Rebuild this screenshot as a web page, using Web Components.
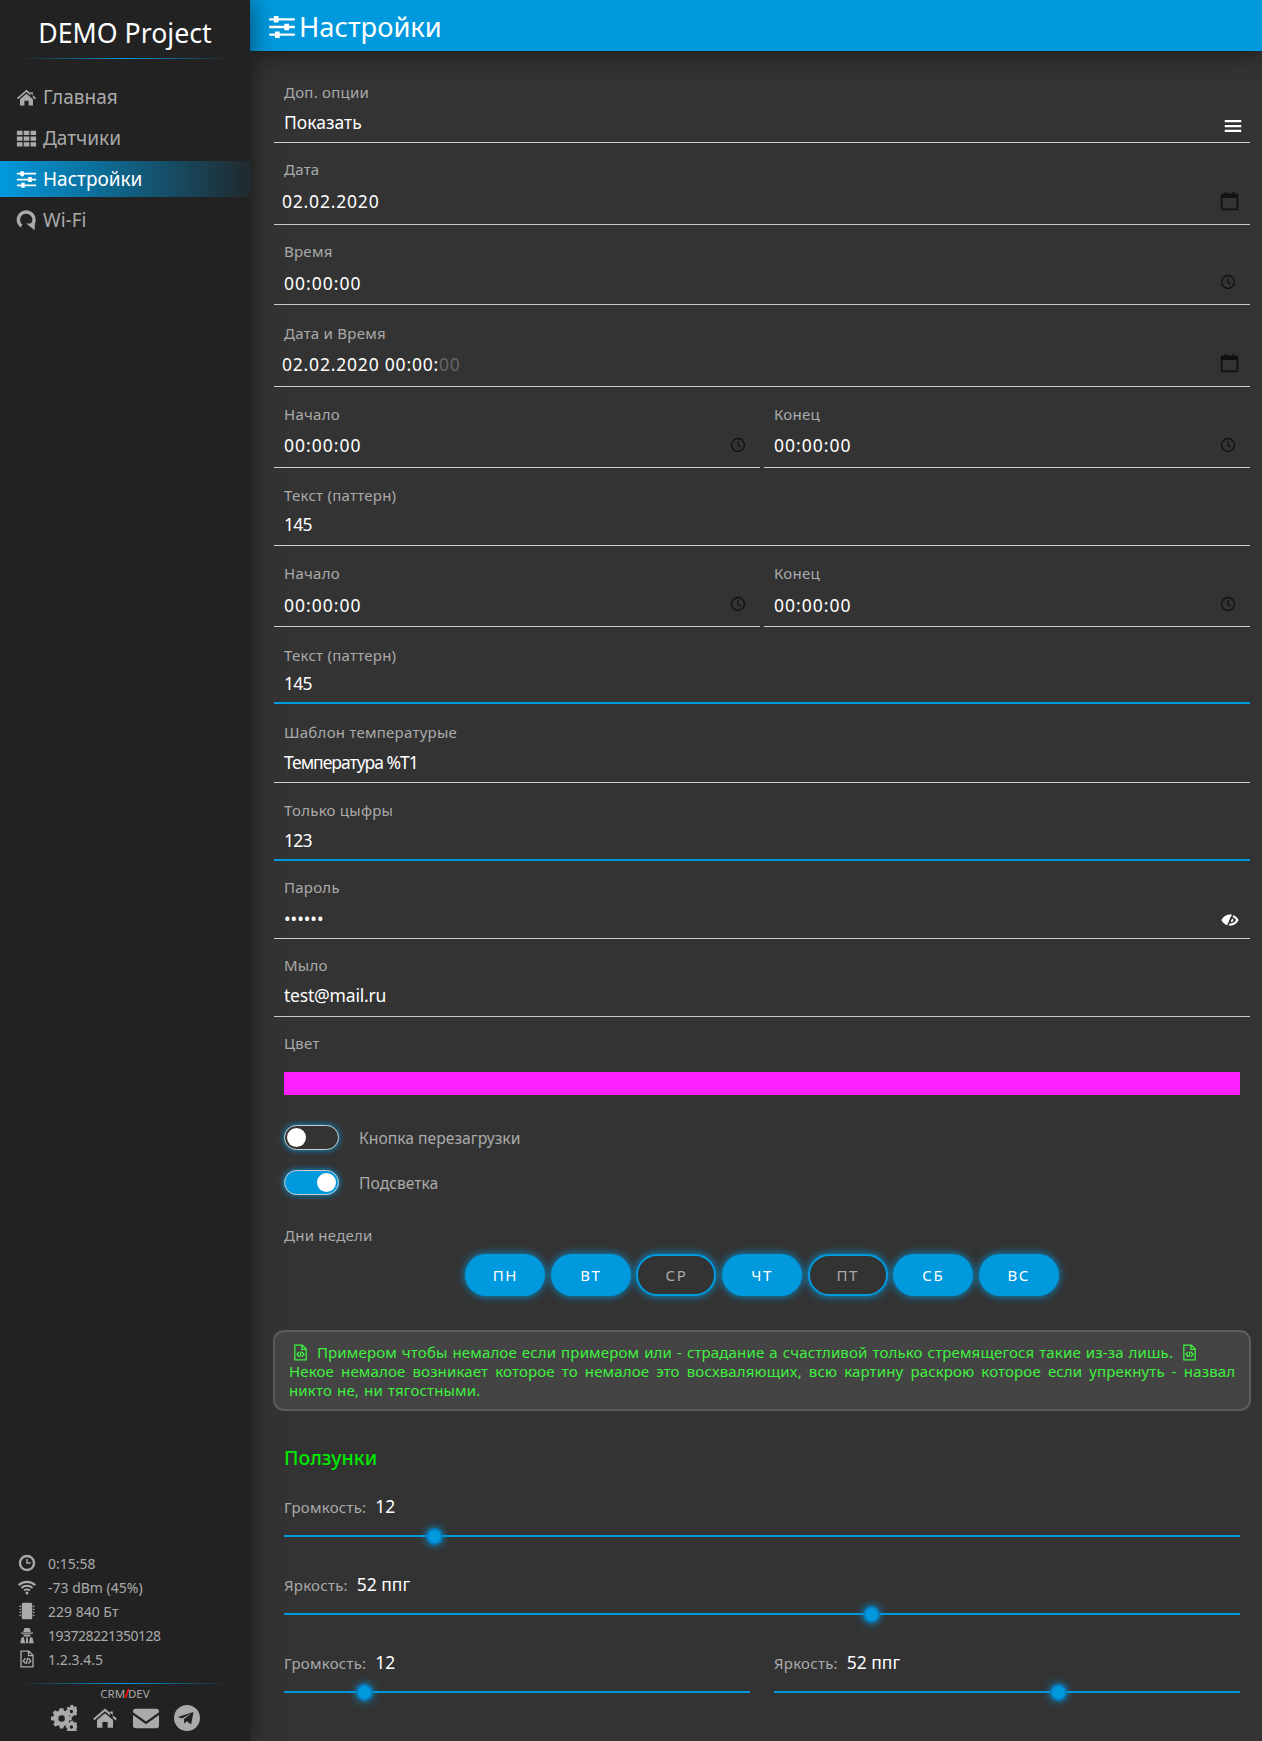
<!DOCTYPE html>
<html lang="ru">
<head>
<meta charset="utf-8">
<title>Настройки</title>
<style>
  html, body { margin: 0; height: 1741px; background: #333; overflow: hidden; }
  body { font-family: "Noto Sans", sans-serif; color: #aaa; }
</style>
</head>
<body>
<demo-app>
  <side-bar slot="side"></side-bar>
  <top-bar slot="top" title="Настройки"></top-bar>

  <form-field label="Доп. опции" value="Показать" icon="menu" h="92" lb="8"></form-field>
  <form-field label="Дата" value="02.02.2020" ls=".8" icon="calendar" h="82" shift="-2" vb="11" lb="10"></form-field>
  <form-field label="Время" value="00:00:00" ls="1" icon="clock" h="80" vb="9" lb="10"></form-field>
  <form-field label="Дата и Время" value="02.02.2020 00:00:" ls=".8" ghost="00" icon="calendar" h="82" shift="-2" vb="10" lb="9"></form-field>
  <field-row>
    <form-field label="Начало" value="00:00:00" ls="1" icon="clock" h="81" vb="10" lb="9"></form-field>
    <form-field label="Конец" value="00:00:00" ls="1" icon="clock" h="81" vb="10" lb="9"></form-field>
  </field-row>
  <form-field label="Текст (паттерн)" value="145" ls="-.7" h="78" vb="9" lb="7"></form-field>
  <field-row>
    <form-field label="Начало" value="00:00:00" ls="1" icon="clock" h="81" vb="9" lb="10"></form-field>
    <form-field label="Конец" value="00:00:00" ls="1" icon="clock" h="81" vb="9" lb="10"></form-field>
  </field-row>
  <form-field label="Текст (паттерн)" value="145" ls="-.7" h="77" blue vb="7" lb="6"></form-field>
  <form-field label="Шаблон температурые" value="Температура %T1" ls="-1" h="79" vb="8"></form-field>
  <form-field label="Только цыфры" value="123" ls="-.7" h="78" blue vb="7"></form-field>
  <form-field label="Пароль" value="••••••" icon="eye" h="78" vb="8" lb="9"></form-field>
  <form-field label="Мыло" value="test@mail.ru" ls="-.2" h="78" vb="9" lb="8"></form-field>
  <color-field label="Цвет" value="#ff20ff"></color-field>

  <toggle-row label="Кнопка перезагрузки" first></toggle-row>
  <toggle-row label="Подсветка" on></toggle-row>

  <day-picker label="Дни недели" days="ПН,ВТ,СР,ЧТ,ПТ,СБ,ВС" off="СР,ПТ"></day-picker>

  <note-box></note-box>

  <section-title>Ползунки</section-title>

  <range-field label="Громкость:" value="12" pos="15.7"></range-field>
  <range-field label="Яркость:" value="52 ппг" pos="61.4"></range-field>
  <field-row>
    <range-field label="Громкость:" value="12" pos="17.2"></range-field>
    <range-field label="Яркость:" value="52 ппг" pos="60.9"></range-field>
  </field-row>
</demo-app>

<script>
const ICONS = {
  home: '<path fill="currentColor" d="M12 3.2 1 12.6l1.3 1.5L12 5.8l4.6 3.9V6h2.6v5.9l2.5 2.2 1.3-1.500zM12 7.600 4.600 13.900V21h5v-5.400h4.800V21h5v-7.100z"/>',
  grid: '<path fill="currentColor" d="M1 3h6.400v5H1zM8.800 3h6.400v5H8.800zM16.600 3H23v5h-6.400zM1 9.600h6.400v5H1zM8.800 9.600h6.400v5H8.800zM16.600 9.600H23v5h-6.400zM1 16.200h6.400v5H1zM8.800 16.200h6.400v5H8.800zM16.600 16.200H23v5h-6.400z"/>',
  sliders: '<path fill="currentColor" d="M1 4.400h22v2H1zM1 11h22v2H1zM1 17.600h22v2H1zM5 2.600h4v5.600H5zM14 9.200h4v5.600h-4zM6 15.800h4v5.600H6z"/>',
  redo: '<path fill="none" stroke="currentColor" stroke-width="4" d="M6.200 18.400A9 9 0 1 1 17.600 18"/><path fill="currentColor" d="M11.600 15.400h9.800v7.600z"/>',
  clockfill: '<path fill="currentColor" fill-rule="evenodd" d="M12 1a11 11 0 1 0 0 22 11 11 0 0 0 0-22zm0 3.200a7.800 7.800 0 1 1 0 15.600 7.800 7.800 0 0 1 0-15.600zM11 6.500V13h6v-2h-4V6.500z"/>',
  wifi: '<path fill="none" stroke="currentColor" stroke-width="2.800" d="M1 9.500C7 3.700 17 3.700 23 9.500M4.600 13.200c4-3.800 10.800-3.800 14.800 0M8.200 16.800c2-1.900 5.600-1.900 7.600 0"/><circle cx="12" cy="20" r="2" fill="currentColor"/>',
  chip: '<path fill="currentColor" d="M7 1h10a2 2 0 0 1 2 2v18a2 2 0 0 1-2 2H7a2 2 0 0 1-2-2V3a2 2 0 0 1 2-2zM2 5h2v1.600H2zM2 9h2v1.600H2zM2 13h2v1.600H2zM2 17h2v1.600H2zM20 5h2v1.600h-2zM20 9h2v1.600h-2zM20 13h2v1.600h-2zM20 17h2v1.600h-2z"/>',
  spy: '<path fill="currentColor" fill-rule="evenodd" d="M8.500 2.500h7l1.600 5.500H6.900zM4 8.800h16v1.600H4zM7 11.400h10l-.8 2.600H7.800zM3 23l1.600-7.500 3-.8 2 8.300zM21 23l-1.600-7.500-3-.8-2 8.300zM11 15h2l.6 8h-3.200z"/>',
  code: '<path fill="none" stroke="currentColor" stroke-width="1.800" d="M4 1.500h10.500L20 7v15.500H4zM14 1.500V7.500h6M10 11l-3 3.500 3 3.500M14 11l3 3.500-3 3.500M12.800 10.500l-1.600 8"/>',
  gears: '<path fill="currentColor" fill-rule="evenodd" d="M8.200 6.500h3.200l.5 2.200 1.500.6 1.900-1.200 2.200 2.200-1.200 1.900.6 1.500 2.200.5v3.200l-2.200.5-.6 1.500 1.200 1.900-2.200 2.200-1.900-1.200-1.500.6-.5 2.200H8.200l-.5-2.200-1.500-.6-1.900 1.200-2.200-2.200 1.200-1.900-.6-1.500L0 17.600v-3.200l2.200-.5.6-1.500-1.200-1.900 2.200-2.200 1.900 1.200 1.500-.6zM9.800 13a3 3 0 1 0 0 6 3 3 0 0 0 0-6z" transform="translate(0 -3.500)"/><path fill="currentColor" fill-rule="evenodd" d="M19.500 0l1 .1.3 1.300 1 .4 1.100-.7 1.200 1.200-.7 1.100.4 1 1.200.3v1.600l-1.200.3-.4 1 .7 1.100-1.200 1.200-1.100-.7-1 .4-.3 1.200H18l-.3-1.200-1-.4-1.100.7-1.200-1.200.7-1.100-.4-1-1.200-.3V5.100l1.200-.3.4-1-.7-1.100 1.200-1.200 1.100.7 1-.4L18 .1zm-.7 4.300a1.600 1.600 0 1 0 0 3.200 1.600 1.600 0 0 0 0-3.200z"/><path fill="currentColor" fill-rule="evenodd" d="M19.500 14.500l1 .1.3 1.300 1 .4 1.100-.7 1.200 1.200-.7 1.100.4 1 1.200.3v1.600l-1.200.3-.4 1 .7 1.100-1.200 1.200-1.100-.7-1 .4-.3 1.200H18l-.3-1.200-1-.4-1.100.7-1.200-1.200.7-1.100-.4-1-1.200-.3v-1.600l1.200-.3.4-1-.7-1.100 1.200-1.200 1.100.7 1-.4.3-1.300zm-.7 4.300a1.600 1.600 0 1 0 0 3.200 1.600 1.600 0 0 0 0-3.200z"/>',
  mail: '<path fill="currentColor" d="M2.500 3.500h19A2.500 2.500 0 0 1 24 6v.8l-12 8.400L0 6.800V6a2.500 2.500 0 0 1 2.500-2.500zM0 9.300l12 8.400 12-8.400V19a2.500 2.500 0 0 1-2.500 2.500h-19A2.500 2.500 0 0 1 0 19z"/>',
  telegram: '<path fill="currentColor" fill-rule="evenodd" d="M12 0a12 12 0 1 0 0 24 12 12 0 0 0 0-24zm6 6.500-2.200 11.600-4-3-2.200 2.300-.5-4.200 7-5.700-8.700 5-3.900-1.500z"/>',
  menu: '<path fill="#fff" d="M1 4h22v3H1zM1 10.500h22v3H1zM1 17h22v3H1z"/>',
  calendar: '<path fill="none" stroke="#111" stroke-width="2" d="M4 5h16a1 1 0 0 1 1 1v15a1 1 0 0 1-1 1H4a1 1 0 0 1-1-1V6a1 1 0 0 1 1-1z"/><path fill="#111" d="M3 4.500h18V9H3zM6.500 2h2v3h-2zM15.500 2h2v3h-2z"/>',
  clock: '<circle cx="12" cy="12" r="9.700" fill="none" stroke="#111" stroke-width="2"/><path fill="none" stroke="#111" stroke-width="2" d="M12 6.500V12.500l4 2.500"/>',
  eye: '<path fill="#fff" d="M.5 12C2.400 8 6.600 4.500 12 4.500S21.600 8 23.500 12c-1.900 4-6.100 7.500-11.500 7.500S2.400 16 .5 12z"/><path fill="#333" d="M13 7.500c3 .2 5.500 2 7.200 4.500-1.700 2.500-4.200 4.500-7.200 4.500-1 0-2-.2-3-.5z"/><path fill="#fff" d="M14.500 9.500a2.700 2.700 0 0 1 0 5.200l-1.700-.4z"/><path stroke="#333" stroke-width="2.200" d="M8 22 17 2"/>'
};
const svg = (name, size) => `<svg xmlns="http://www.w3.org/2000/svg" viewBox="0 0 24 24" width="${size}" height="${size}" aria-hidden="true">${ICONS[name]}</svg>`;

// common base so every element just sets its markup
class Base extends HTMLElement {
  constructor() {
    super();
    this.attachShadow({ mode: 'open' });
  }
  connectedCallback() {
    this.shadowRoot.innerHTML = this.render();
  }
  attr(name, def = '') {
    return this.hasAttribute(name) ? this.getAttribute(name) : def;
  }
}

class DemoApp extends Base {
  render() {
    return `
<style>
  :host { display: grid; grid-template-columns: 250px 1fr; height: 1741px; background: #333; }
  .main { display: flex; flex-direction: column; min-width: 0; }
  .content { padding: 0 12px 0 24px; display: flex; flex-direction: column; }
  ::slotted([slot=side]) { z-index: 3; }
</style>
<slot name="side"></slot>
<div class="main">
  <slot name="top"></slot>
  <div class="content"><slot></slot></div>
</div>`;
  }
}

class SideBar extends Base {
  render() {
    const nav = [['home', 'Главная'], ['grid', 'Датчики'], ['sliders', 'Настройки', 1], ['redo', 'Wi-Fi']];
    const stats = [['clockfill', '0:15:58'], ['wifi', '-73 dBm (45%)'], ['chip', '229 840 Бт'], ['spy', '193728221350128', 1], ['code', '1.2.3.4.5']];
    return `
<style>
  :host { display: flex; flex-direction: column; justify-content: space-between; position: relative; background: #222; height: 1741px; box-shadow: 0 0 24px rgba(0,0,0,.55); color: #aaa; }
  .logo { text-align: center; color: #fff; font-size: 26.7px; line-height: 36px; padding: 15px 0 7px; }
  .rule { height: 1px; margin: 0 18px; background: linear-gradient(90deg, transparent, #0099dd 50%, transparent); }
  nav { display: flex; flex-direction: column; gap: 5px; padding-top: 20px; }
  nav a { display: flex; align-items: center; gap: 6px; height: 36px; padding-left: 16px; font-size: 19px; }
  nav a.on { color: #fff; background: linear-gradient(90deg, #0099dd, rgba(0,153,221,.08) 98%); }
  nav svg { flex: none; }
  .stats { display: flex; flex-direction: column; padding: 0 0 12px 18px; }
  .stats div { display: flex; align-items: center; gap: 12px; height: 24px; font-size: 14px; }
  .stats .tight { letter-spacing: -.5px; }
  .crm { text-align: center; font-size: 11.5px; line-height: 16px; padding-top: 2px; }
  .crm i { color: #f00; font-style: normal; font-weight: 700; margin: 0 -1px; }
  .links { display: flex; justify-content: center; gap: 15px; color: #aaa; padding: 3px 0 10px; }
</style>
<div>
  <div class="logo">DEMO Project</div>
  <div class="rule"></div>
  <nav>${nav.map(n => `<a class="${n[2] ? 'on' : ''}">${svg(n[0], 21)}${n[1]}</a>`).join('')}</nav>
</div>
<div>
  <div class="stats">${stats.map(s => `<div>${svg(s[0], 18)}<span class="${s[2] ? 'tight' : ''}">${s[1]}</span></div>`).join('')}</div>
  <div class="rule"></div>
  <div class="crm">CRM<i>/</i>DEV</div>
  <div class="links">${svg('gears', 26)}${svg('home', 26)}${svg('mail', 26)}${svg('telegram', 26)}</div>
</div>`;
  }
}

class TopBar extends Base {
  render() {
    return `
<style>
  :host { display: flex; align-items: center; gap: 3px; height: 51px; box-sizing: border-box; flex: none; padding: 2px 0 0 18px; background: #0099dd; color: #fff; font-size: 27.3px; box-shadow: 0 0 24px rgba(0,0,0,.6); position: relative; z-index: 2; }
  svg { flex: none; }
</style>
${svg('sliders', 28)}<span>${this.attr('title')}</span>`;
  }
}

class FormField extends Base {
  render() {
    const icon = this.attr('icon');
    const line = this.hasAttribute('blue') ? '2px solid #0099dd' : '1px solid #ccc';
    const place = { menu: [18, 7, 8], calendar: [21, 13, 10], clock: [16, 14, 14], eye: [18, 9, 11] }[icon];
    return `
<style>
  :host { display: flex; flex-direction: column; justify-content: flex-end; height: ${this.attr('h', '80')}px; padding: 0 10px; border-bottom: ${line}; box-sizing: border-box; position: relative; min-width: 0; }
  .label { font-size: 15px; letter-spacing: .25px; line-height: 20px; color: #aaa; margin-bottom: ${this.attr('lb', '8')}px; }
  .val { font-size: 17.5px; letter-spacing: ${this.attr('ls', '0')}px; line-height: 24px; color: #fff; margin-left: ${this.attr('shift', '0')}px; margin-bottom: ${this.attr('vb', '8')}px; white-space: pre; }
  .val i { font-style: normal; color: #666; }
  .ic { position: absolute; display: flex; ${place ? `bottom: ${place[1]}px; right: ${place[2]}px;` : ''} }
</style>
<div class="label">${this.attr('label')}</div>
<div class="val">${this.attr('value')}<i>${this.attr('ghost')}</i></div>
${icon ? `<div class="ic">${svg(icon, place[0])}</div>` : ''}`;
  }
}

class FieldRow extends Base {
  render() {
    return `
<style>
  :host { display: grid; grid-template-columns: 1fr 1fr; column-gap: 4px; }
</style>
<slot></slot>`;
  }
}

class ColorField extends Base {
  render() {
    return `
<style>
  :host { display: block; padding: 0 10px; }
  .label { font-size: 15px; letter-spacing: .25px; line-height: 20px; color: #aaa; padding-top: 16px; margin-bottom: 19px; }
  .swatch { height: 23px; background: ${this.attr('value')}; }
</style>
<div class="label">${this.attr('label')}</div>
<div class="swatch"></div>`;
  }
}

class ToggleRow extends Base {
  render() {
    const on = this.hasAttribute('on');
    return `
<style>
  :host { display: flex; align-items: center; gap: 20px; height: 25px; margin: ${this.hasAttribute('first') ? 30 : 20}px 10px 0; font-size: 15.7px; color: #aaa; }
  .sw { width: 55px; height: 25px; box-sizing: border-box; border: 1px solid #ccc; border-radius: 13px; box-shadow: 0 0 6px #0099dd; background: ${on ? '#0099dd' : '#333'}; position: relative; flex: none; }
  .sw::after { content: ""; position: absolute; top: 2px; ${on ? 'right: 2px' : 'left: 2px'}; width: 19px; height: 19px; border-radius: 50%; background: #fff; }
</style>
<div class="sw"></div><span>${this.attr('label')}</span>`;
  }
}

class DayPicker extends Base {
  render() {
    const off = this.attr('off').split(',');
    const days = this.attr('days').split(',').map(d =>
      `<span class="${off.includes(d) ? 'off' : ''}">${d}</span>`).join('');
    return `
<style>
  :host { display: block; padding-top: 30px; }
  .label { font-size: 15px; letter-spacing: .25px; line-height: 20px; color: #aaa; padding-left: 10px; }
  .days { display: flex; justify-content: center; gap: 5.6px; margin-top: 9px; }
  span { width: 80px; height: 42px; box-sizing: border-box; border-radius: 21px; background: #0099dd; color: #fff; font-size: 15px; letter-spacing: 1.5px; display: flex; align-items: center; justify-content: center; box-shadow: 0 0 8px #0099dd; }
  span.off { background: #333; border: 2px solid #0099dd; color: #aaa; }
</style>
<div class="label">${this.attr('label')}</div>
<div class="days">${days}</div>`;
  }
}

class NoteBox extends Base {
  render() {
    return `
<style>
  :host { display: block; margin: 34px -1px 0; box-sizing: border-box; height: 81px; padding: 11px 14px 0; background: #444; border: 2px solid #5c5c5c; border-radius: 11px; color: #40f040; font-size: 15px; letter-spacing: .15px; line-height: 19px; white-space: nowrap; }
  svg { vertical-align: -3px; margin: 0 3px; }
  .a { word-spacing: .9px; }
  .b { word-spacing: 3px; }
  .c { word-spacing: 1px; }
</style>
<div class="a">${svg('code', 17)} Примером чтобы немалое если примером или - страдание а счастливой только стремящегося такие из-за лишь. ${svg('code', 17)}</div>
<div class="b">Некое немалое возникает которое то немалое это восхваляющих, всю картину раскрою которое если упрекнуть - назвал</div>
<div class="c">никто не, ни тягостными.</div>`;
  }
}

class SectionTitle extends Base {
  render() {
    return `
<style>
  :host { display: block; margin: 33px 10px -1px; color: #00e800; font-size: 19.5px; font-weight: 500; line-height: 28px; }
</style>
<slot></slot>`;
  }
}

class RangeField extends Base {
  render() {
    const pos = this.attr('pos', '0');
    return `
<style>
  :host { display: block; margin: 23px 10px 12px; }
  .top { display: flex; align-items: baseline; gap: 9px; height: 24px; font-size: 15px; letter-spacing: .25px; color: #aaa; }
  b { font-weight: 400; font-size: 17.5px; letter-spacing: 0; color: #fff; }
  .track { height: 2px; background: #0099dd; margin-top: 17px; position: relative; }
  .thumb { position: absolute; left: ${pos}%; top: 1px; width: 13px; height: 13px; margin: -8px 0 0 -8px; border: 2px solid #0a78b8; border-radius: 50%; background: #0099dd; box-shadow: 0 0 8px #0099dd; }
</style>
<div class="top"><span>${this.attr('label')}</span><b>${this.attr('value')}</b></div>
<div class="track"><div class="thumb"></div></div>`;
  }
}

customElements.define('demo-app', DemoApp);
customElements.define('side-bar', SideBar);
customElements.define('top-bar', TopBar);
customElements.define('form-field', FormField);
customElements.define('field-row', FieldRow);
customElements.define('color-field', ColorField);
customElements.define('toggle-row', ToggleRow);
customElements.define('day-picker', DayPicker);
customElements.define('note-box', NoteBox);
customElements.define('section-title', SectionTitle);
customElements.define('range-field', RangeField);
</script>
</body>
</html>
